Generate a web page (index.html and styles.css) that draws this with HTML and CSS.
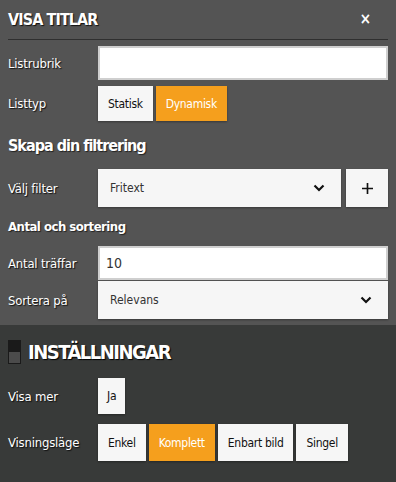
FILE: index.html
```html
<!DOCTYPE html>
<html lang="sv">
<head>
<meta charset="utf-8">
<link rel="stylesheet" href="styles.css">
</head>
<body>
<div class="panel top">
  <div class="header">
    <span class="title">VISA TITLAR</span>
    <span class="close">×</span>
  </div>
  <div class="row r-listrubrik">
    <label class="label">Listrubrik</label>
    <input class="input" type="text" value="">
  </div>
  <div class="row r-listtyp">
    <label class="label">Listtyp</label>
    <div class="btns">
      <span class="btn">Statisk</span>
      <span class="btn active">Dynamisk</span>
    </div>
  </div>
  <h2 class="h2">Skapa din filtrering</h2>
  <div class="row r-filter">
    <label class="label">Välj filter</label>
    <div class="filter">
      <div class="select">
        <span>Fritext</span>
        <svg class="chev" viewBox="0 0 12 8" width="12" height="8"><path d="M1.5 1.5 L6 6 L10.5 1.5" fill="none" stroke="#111" stroke-width="2.2"/></svg>
      </div>
      <div class="plus">
        <svg viewBox="0 0 12 12" width="11" height="11"><path d="M6 0 V12 M0 6 H12" stroke="#111" stroke-width="1.8"/></svg>
      </div>
    </div>
  </div>
  <h3 class="h3">Antal och sortering</h3>
  <div class="row r-antal">
    <label class="label">Antal träffar</label>
    <input class="input num" type="text" value="10">
  </div>
  <div class="row r-sort">
    <label class="label">Sortera på</label>
    <div class="select wide">
      <span>Relevans</span>
      <svg class="chev" viewBox="0 0 12 8" width="12" height="8"><path d="M1.5 1.5 L6 6 L10.5 1.5" fill="none" stroke="#111" stroke-width="2.2"/></svg>
    </div>
  </div>
</div>
<div class="panel bottom">
  <div class="h1">
    <span class="toggle"><span class="t-top"></span><span class="t-bot"></span></span>
    <span>INSTÄLLNINGAR</span>
  </div>
  <div class="row r-visamer">
    <label class="label">Visa mer</label>
    <div class="btns">
      <span class="btn">Ja</span>
    </div>
  </div>
  <div class="row r-visning">
    <label class="label">Visningsläge</label>
    <div class="btns">
      <span class="btn">Enkel</span>
      <span class="btn active">Komplett</span>
      <span class="btn">Enbart bild</span>
      <span class="btn">Singel</span>
    </div>
  </div>
</div>
</body>
</html>
```
FILE: styles.css
```css
html, body {
  margin: 0;
  padding: 0;
}
body {
  width: 396px;
  height: 482px;
  background: #383a39;
  font-family: "DejaVu Sans Condensed", "DejaVu Sans", sans-serif;
  font-stretch: condensed;
  font-size: 13px;
  color: #fff;
  overflow: hidden;
}
.panel {
  padding: 0 8px;
}
.top {
  background: #545454;
  height: 325px;
  box-sizing: border-box;
}
.bottom {
  background: #383a39;
  height: 157px;
  box-sizing: border-box;
  border-bottom: 1px solid #555;
}
.header {
  height: 39px;
  border-bottom: 1px solid #2f2f2f;
  display: flex;
  align-items: center;
  justify-content: space-between;
}
.title {
  font-weight: bold;
  font-size: 16px;
  letter-spacing: -0.9px;
  text-shadow: 1px 1px 1px #111;
}
.close {
  font-family: "DejaVu Sans", sans-serif;
  font-weight: bold;
  font-size: 15px;
  margin-right: 17px;
  line-height: 1;
}
.row {
  display: grid;
  grid-template-columns: 90px 1fr;
  align-items: center;
}
.label {
  letter-spacing: -0.2px;
  text-shadow: 1px 1px 1px #111;
}
.r-listrubrik { margin-top: 6px; }
.input {
  box-sizing: border-box;
  width: 100%;
  height: 34px;
  margin: 0;
  border: 2px solid #cfcfcf;
  background: #fff;
  font: inherit;
  font-size: 14px;
  color: #333;
  padding: 0 5px;
  outline: none;
}
.r-listtyp { margin-top: 6px; }
.btns {
  display: flex;
  gap: 3px;
}
.btn {
  box-sizing: border-box;
  height: 35px;
  padding: 0 10px;
  display: flex;
  align-items: center;
  background: #f6f6f6;
  color: #111;
  font-size: 12px;
  letter-spacing: -0.3px;
  box-shadow: 0 1px 2px rgba(0,0,0,0.35);
}
.btn.active {
  background: #f59f1d;
  color: #fff;
}
.h2 {
  margin: 0;
  height: 48px;
  display: flex;
  align-items: center;
  font-size: 16px;
  font-weight: bold;
  letter-spacing: -1px;
  text-shadow: 1px 1px 1px #222;
}
.filter {
  display: flex;
  gap: 5px;
}
.select {
  flex: 1;
  box-sizing: border-box;
  height: 38px;
  background: #f6f6f6;
  color: #333;
  display: flex;
  align-items: center;
  justify-content: space-between;
  padding: 0 16px 0 12px;
  box-shadow: 0 1px 2px rgba(0,0,0,0.35);
  font-size: 12px;
}
.plus {
  width: 42px;
  height: 38px;
  background: #f6f6f6;
  display: flex;
  align-items: center;
  justify-content: center;
  box-shadow: 0 1px 2px rgba(0,0,0,0.35);
}
.h3 {
  margin: 0;
  height: 39px;
  display: flex;
  align-items: center;
  font-size: 13px;
  font-weight: bold;
  letter-spacing: -0.5px;
  text-shadow: 1px 1px 1px #222;
}
.num {
  padding-left: 6px;
}
.r-sort { margin-top: 1px; }
.wide { width: 100%; }
.h1 {
  display: flex;
  align-items: center;
  gap: 7px;
  height: 34px;
  margin-top: 10px;
  font-size: 20px;
  font-weight: bold;
  letter-spacing: -1.5px;
  text-shadow: 1px 1px 1px #000;
}
.toggle {
  width: 13px;
  height: 24px;
  display: flex;
  flex-direction: column;
  box-sizing: border-box;
  border: 1px solid #1a1a1a;
}
.t-top { flex: 1; background: #1a1a1a; }
.t-bot { flex: 1; background: #4b4b4b; }
.r-visamer { margin-top: 9px; }
.r-visamer .btn { height: 36px; padding: 0 9px; }
.r-visning { margin-top: 10px; }
.r-visning .btn { height: 37px; }
```
